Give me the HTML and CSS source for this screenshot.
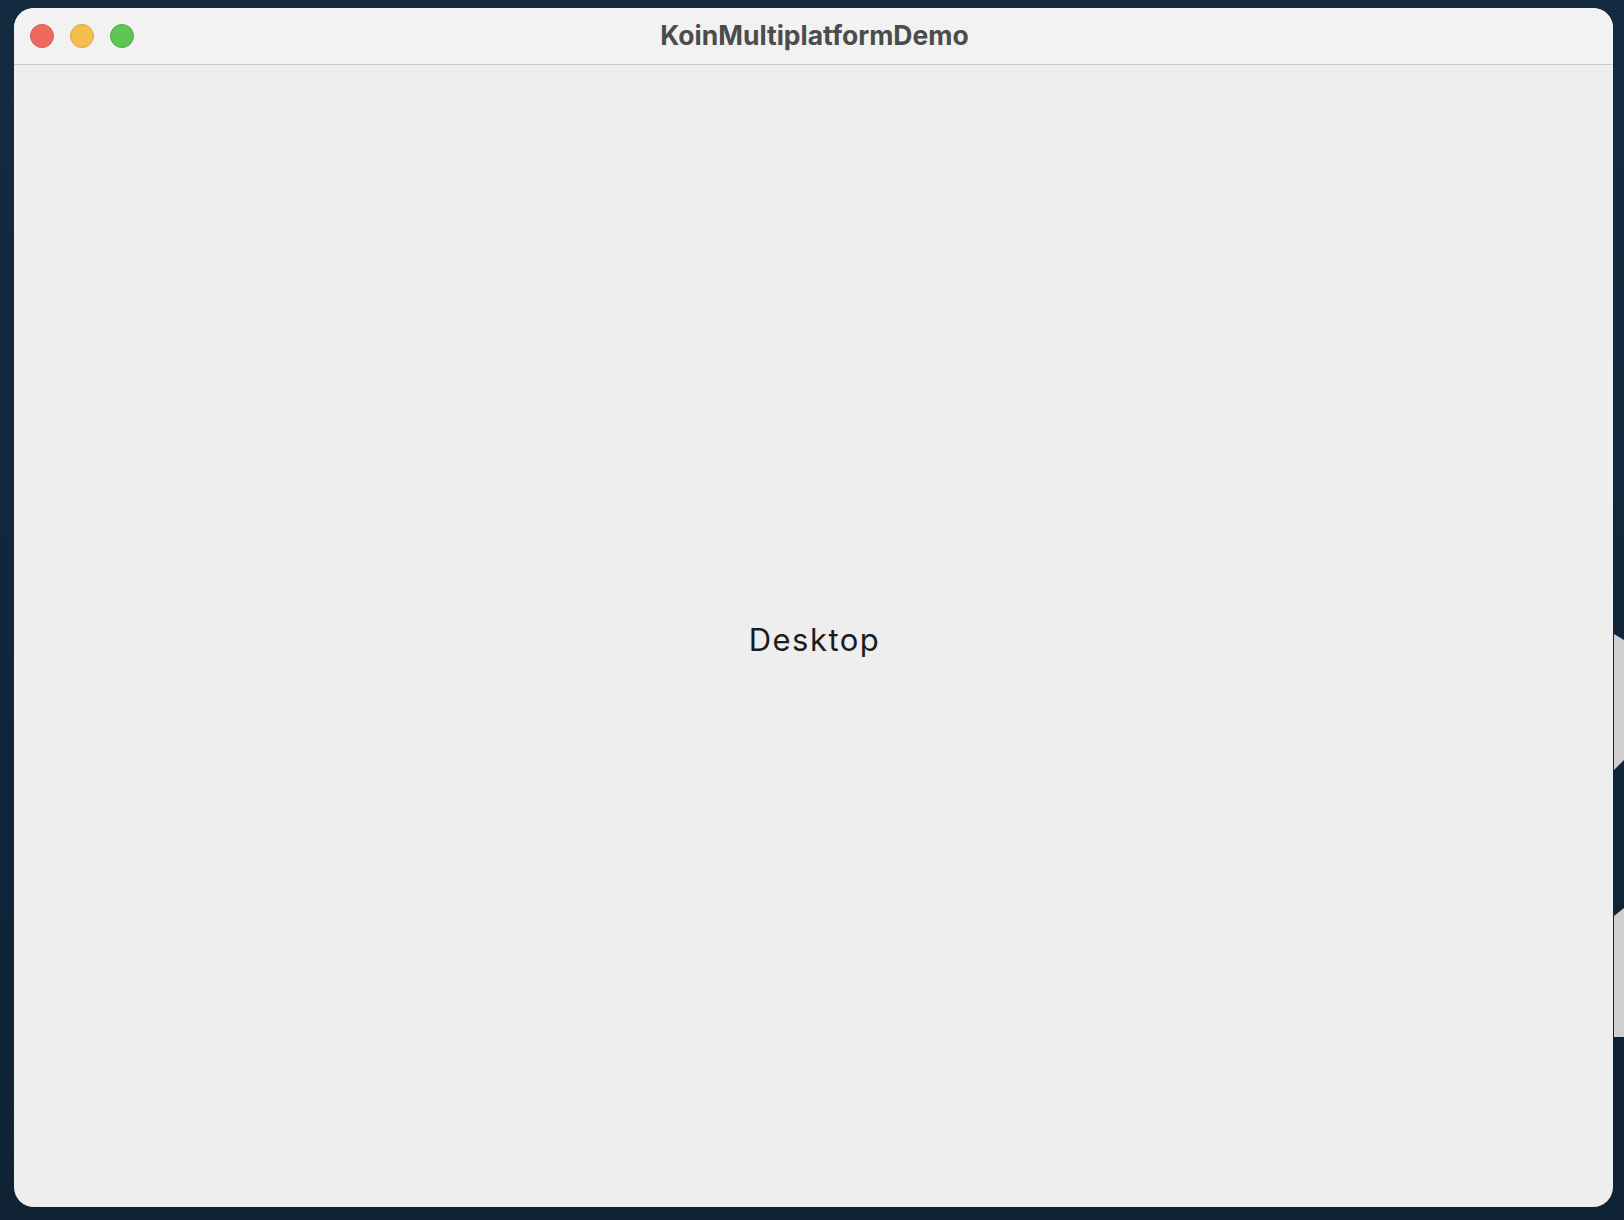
FILE: index.html
```html
<!DOCTYPE html>
<html>
<head>
<meta charset="utf-8">
<link rel="stylesheet" href="styles.css">
</head>
<body>
<div class="desk">
  <div class="bg-shape bg-shape-a"></div>
  <div class="bg-shape bg-shape-b"></div>
  <div class="window">
    <div class="titlebar">
      <div class="lights">
        <span class="light red"></span>
        <span class="light yellow"></span>
        <span class="light green"></span>
      </div>
      <div class="title">KoinMultiplatformDemo</div>
    </div>
    <div class="content">
      <div class="label">Desktop</div>
    </div>
  </div>
</div>
</body>
</html>
```
FILE: styles.css
```css
html, body {
  margin: 0;
  padding: 0;
}
body {
  width: 1624px;
  height: 1220px;
  overflow: hidden;
  background: #12263a;
}
.desk {
  position: relative;
  width: 1624px;
  height: 1220px;
  padding: 8px 0 0 14px;
  box-sizing: border-box;
  background: linear-gradient(180deg, #132a40 0%, #10253a 60%, #0f2234 100%);
}
.bg-shape {
  position: absolute;
  right: 0;
  width: 10px;
  background: #cfcfcf;
}
.bg-shape-a {
  top: 634px;
  height: 136px;
  clip-path: polygon(0 0, 100% 6px, 100% 126px, 0 100%);
}
.bg-shape-b {
  top: 908px;
  height: 129px;
  clip-path: polygon(0 8px, 100% 0, 100% 100%, 0 100%);
}
.window {
  position: relative;
  width: 1599px;
  height: 1199px;
  border-radius: 20px;
  overflow: hidden;
  background: #eeeeee;
  display: flex;
  flex-direction: column;
}
.titlebar {
  position: relative;
  height: 57px;
  flex: none;
  background: #f1f2f1;
  border-bottom: 1px solid #c9c9c9;
  box-sizing: border-box;
  display: flex;
  align-items: center;
  justify-content: center;
}
.lights {
  position: absolute;
  left: 16px;
  top: 16px;
  display: flex;
  gap: 16px;
}
.light {
  width: 24px;
  height: 24px;
  border-radius: 50%;
  box-sizing: border-box;
}
.red { background: #ee6a5f; border: 1px solid #d95a50; }
.yellow { background: #f5bf4f; border: 1px solid #dea63c; }
.green { background: #61c554; border: 1px solid #50ab44; }
.title {
  font-family: Inter, "Liberation Sans", sans-serif;
  font-weight: 700;
  font-size: 26.5px;
  color: #4c4c4c;
  letter-spacing: 0px;
  margin-left: 2px;
  margin-top: -3px;
}
.content {
  flex: 1;
  display: flex;
  align-items: center;
  justify-content: center;
}
.label {
  font-family: Inter, "Liberation Sans", sans-serif;
  font-size: 31px;
  color: #1c1c1c;
  letter-spacing: 1.5px;
  margin-top: 6px;
  margin-left: 2px;
}
```
